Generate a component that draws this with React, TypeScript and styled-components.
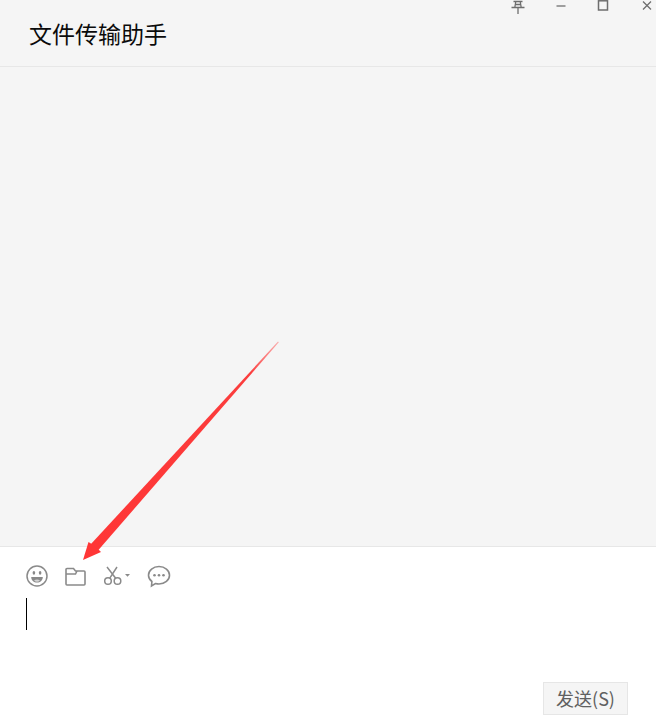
import React, { FC } from "react";
import styled, { createGlobalStyle } from "styled-components";

const GlobalStyle = createGlobalStyle`
  html, body {
    margin: 0;
    padding: 0;
    background: #fff;
  }
  * {
    box-sizing: border-box;
  }
`;

const Page = styled.div`
  position: relative;
  width: 656px;
  height: 717px;
  display: flex;
  flex-direction: column;
  overflow: hidden;
  background: #fff;
  font-family: "Liberation Sans", "Noto Sans CJK SC", sans-serif;
`;
const Header = styled.header`
  height: 67px;
  flex: none;
  background: #f5f5f5;
  border-bottom: 1px solid #e7e7e7;
`;
const WindowBar = styled.div`
  height: 14px;
  padding-right: 2px;
  display: flex;
  justify-content: flex-end;
  color: #6e6e6e;
`;
const WindowButton = styled.button<{ $gap: number }>`
  width: 14px;
  height: 14px;
  flex: none;
  margin-left: ${(p) => p.$gap}px;
  padding: 0;
  border: 0;
  background: none;
  color: inherit;
  display: flex;
  justify-content: center;
  align-items: flex-start;
`;
const Title = styled.h1`
  margin: 3px 0 0 29px;
  font-family: "Noto Sans CJK SC", sans-serif;
  font-size: 23px;
  line-height: 32px;
  font-weight: 400;
  color: #0b0b0b;
`;
const Messages = styled.main`
  flex: 1;
  background: #f5f5f5;
`;
const Composer = styled.section`
  height: 171px;
  flex: none;
  display: flex;
  flex-direction: column;
  background: #fff;
  border-top: 1px solid #e7e7e7;
`;
const Toolbar = styled.div`
  height: 51px;
  padding: 17px 0 0 25px;
  display: flex;
  align-items: flex-start;
  color: #8a8a8a;
`;
const ToolButton = styled.button<{ $width: number }>`
  width: ${(p) => p.$width}px;
  height: 24px;
  flex: none;
  padding: 0;
  border: 0;
  background: none;
  color: inherit;
  display: flex;
  align-items: flex-start;
`;
const InputArea = styled.div`
  flex: 1;
  padding-left: 26px;
`;
const Caret = styled.div`
  width: 1px;
  height: 32px;
  background: #000;
`;
const Footer = styled.div`
  height: 34px;
  margin-bottom: 2px;
  padding-right: 28px;
  display: flex;
  justify-content: flex-end;
  align-items: flex-end;
`;
const SendButton = styled.button`
  width: 85px;
  height: 33px;
  padding: 0;
  background: #f5f5f5;
  border: 1px solid #e6e6e6;
  color: #606060;
  font-family: "Noto Sans CJK SC", sans-serif;
  font-size: 18px;
  line-height: 31px;
`;
const ArrowOverlay = styled.svg`
  position: absolute;
  left: 0;
  top: 0;
  pointer-events: none;
`;

const PinIcon: FC = () => (
  <svg width="14" height="14" viewBox="0 0 14 14" fill="none" stroke="currentColor" strokeWidth="1.3">
    <path d="M2.500 1.500h9M4.800 1.500 3.800 7.500M9.200 1.500l1 6M0.500 7.500h13M7 7.500V14M4.500 4.500h5" />
  </svg>
);
const MinIcon: FC = () => (
  <svg width="12" height="14" viewBox="0 0 12 14" fill="none" stroke="currentColor" strokeWidth="1.3">
    <path d="M1.500 6h9" />
  </svg>
);
const MaxIcon: FC = () => (
  <svg width="12" height="14" viewBox="0 0 12 14" fill="none" stroke="currentColor" strokeWidth="1.5">
    <rect x="1.500" y="0.800" width="9" height="9.200" />
  </svg>
);
const CloseIcon: FC = () => (
  <svg width="10" height="14" viewBox="0 0 10 14" fill="none" stroke="currentColor" strokeWidth="1.3">
    <path d="M1 1.500 9 9.500M9 1.500 1 9.500" />
  </svg>
);

const EmojiIcon: FC = () => (
  <svg width="24" height="24" viewBox="0 0 24 24" fill="none" stroke="currentColor" strokeWidth="1.5">
    <circle cx="12" cy="12" r="10" />
    <ellipse cx="8.900" cy="8.800" rx="1.300" ry="1.900" fill="currentColor" stroke="none" />
    <ellipse cx="15.100" cy="8.800" rx="1.300" ry="1.900" fill="currentColor" stroke="none" />
    <path d="M6.200 13h11.600c0 3.300-2.600 5.600-5.800 5.600S6.200 16.300 6.200 13Z" fill="currentColor" stroke="none" />
    <path d="M9 16.600c.9-.7 1.900-1 3-1s2.100.3 3 1c-.9.800-1.900 1.200-3 1.200s-2.100-.4-3-1.200Z" fill="#d4d4d4" stroke="none" />
  </svg>
);
const FolderIcon: FC = () => (
  <svg width="24" height="24" viewBox="0 0 24 24" fill="none" stroke="currentColor" strokeWidth="1.6">
    <path d="M2 5.500A1 1 0 0 1 3 4.500h6.500l2 2.500H20a1 1 0 0 1 1 1v12a1 1 0 0 1-1 1H3a1 1 0 0 1-1-1Z" />
    <path d="M2 10h9.500l1.500-3" />
  </svg>
);
const ScissorsIcon: FC = () => (
  <svg width="30" height="24" viewBox="0 0 30 24" fill="none" stroke="currentColor" strokeWidth="1.5">
    <circle cx="5" cy="17" r="3.300" />
    <circle cx="14.500" cy="17" r="3.300" />
    <path d="M6.800 14.200 14 3M12.700 14.200 4 3" />
    <path d="M22 10h5l-2.500 2.800Z" fill="currentColor" stroke="none" />
  </svg>
);
const ChatIcon: FC = () => (
  <svg width="24" height="24" viewBox="0 0 24 24" fill="none" stroke="currentColor" strokeWidth="1.6">
    <path d="M12 2.500c5.800 0 10.500 3.800 10.500 8.700S17.800 20 12 20c-1.300 0-2.500-.2-3.600-.5L4.500 22l.4-4.500C2.800 15.900 1.500 13.700 1.500 11.200 1.500 6.300 6.200 2.500 12 2.500Z" />
    <circle cx="7.500" cy="11.200" r="1.300" fill="currentColor" stroke="none" />
    <circle cx="12" cy="11.200" r="1.300" fill="currentColor" stroke="none" />
    <circle cx="16.500" cy="11.200" r="1.300" fill="currentColor" stroke="none" />
  </svg>
);

const App: FC = () => {
  return (
    <Page>
      <GlobalStyle />
      <Header>
        <WindowBar>
          <WindowButton $gap={0} title="pin">
            <PinIcon />
          </WindowButton>
          <WindowButton $gap={29} title="minimize">
            <MinIcon />
          </WindowButton>
          <WindowButton $gap={28} title="maximize">
            <MaxIcon />
          </WindowButton>
          <WindowButton $gap={30} title="close">
            <CloseIcon />
          </WindowButton>
        </WindowBar>
        <Title>文件传输助手</Title>
      </Header>
      <Messages />
      <Composer>
        <Toolbar>
          <ToolButton $width={39}>
            <EmojiIcon />
          </ToolButton>
          <ToolButton $width={39}>
            <FolderIcon />
          </ToolButton>
          <ToolButton $width={44}>
            <ScissorsIcon />
          </ToolButton>
          <ToolButton $width={24}>
            <ChatIcon />
          </ToolButton>
        </Toolbar>
        <InputArea>
          <Caret />
        </InputArea>
        <Footer>
          <SendButton>发送(S)</SendButton>
        </Footer>
      </Composer>
      <ArrowOverlay width="656" height="717" viewBox="0 0 656 717">
        <defs>
          <linearGradient id="shaft" gradientUnits="userSpaceOnUse" x1="278" y1="342" x2="95" y2="546">
            <stop offset="0" stopColor="#ff6060" stopOpacity="0.5" />
            <stop offset="0.15" stopColor="#fb3d3d" />
            <stop offset="1" stopColor="#ff3636" />
          </linearGradient>
        </defs>
        <path d="M278.800 342.300 278 341.600 90.500 544.500 98 550.500Z" fill="url(#shaft)" />
        <path d="M83 560 88.500 542 94 545.500 98 549 101 552Z" fill="#ff3636" />
      </ArrowOverlay>
    </Page>
  );
};

export default App;
